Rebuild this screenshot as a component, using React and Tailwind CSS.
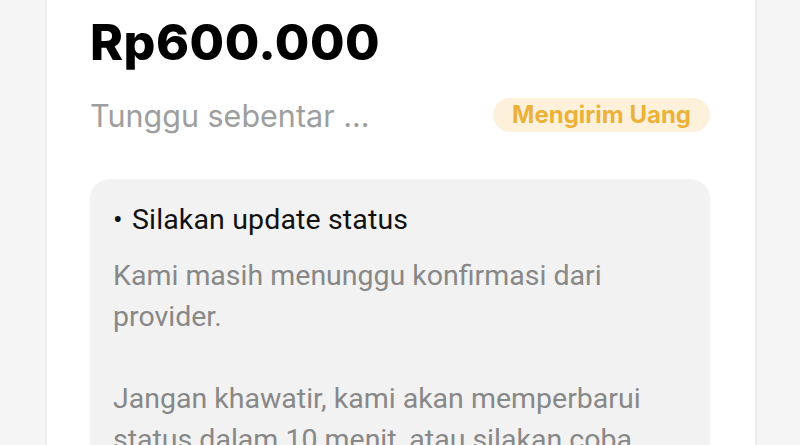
export default function App() {
  return (
    <div className="h-[445px] overflow-hidden bg-[#f5f5f5] pl-[45px] pr-[43px]">
      <div className="h-full border-x-2 border-[#ececec] bg-white px-[43px] pt-[12px]">
        <h1 className="font-['Inter',sans-serif] text-[50px] font-extrabold leading-[60px] tracking-[0.01em] text-black">
          Rp600.000
        </h1>

        <div className="mt-[24px] flex items-center justify-between">
          <p className="font-['Inter',sans-serif] text-[30.5px] leading-[40px] text-[#9e9e9e]">
            Tunggu sebentar ...
          </p>
          <span className="-mt-[2px] mr-[2px] rounded-full bg-[#fdf1dc] px-[19px] py-[3px] font-['Inter',sans-serif] text-[24px] font-bold leading-[28px] text-[#ebb23a]">
            Mengirim Uang
          </span>
        </div>

        <div className="mt-[43px] mr-[2px] rounded-[20px] bg-[#f2f2f2] px-[23px] pt-[20px] pb-8 font-['Roboto',sans-serif]">
          <p className="flex text-[28.5px] leading-[41px] tracking-[0.005em] text-[#111111]">
            <span className="w-[19px]">•</span>
            <span>Silakan update status</span>
          </p>
          <div className="mt-[15px] text-[28.5px] leading-[41px] text-[#888888]">
            <p>Kami masih menunggu konfirmasi dari provider.</p>
            <p className="mt-[41px]">
              Jangan khawatir, kami akan memperbarui status dalam 10 menit, atau silakan coba
              update status kembali.
            </p>
          </div>
        </div>
      </div>
    </div>
  )
}
